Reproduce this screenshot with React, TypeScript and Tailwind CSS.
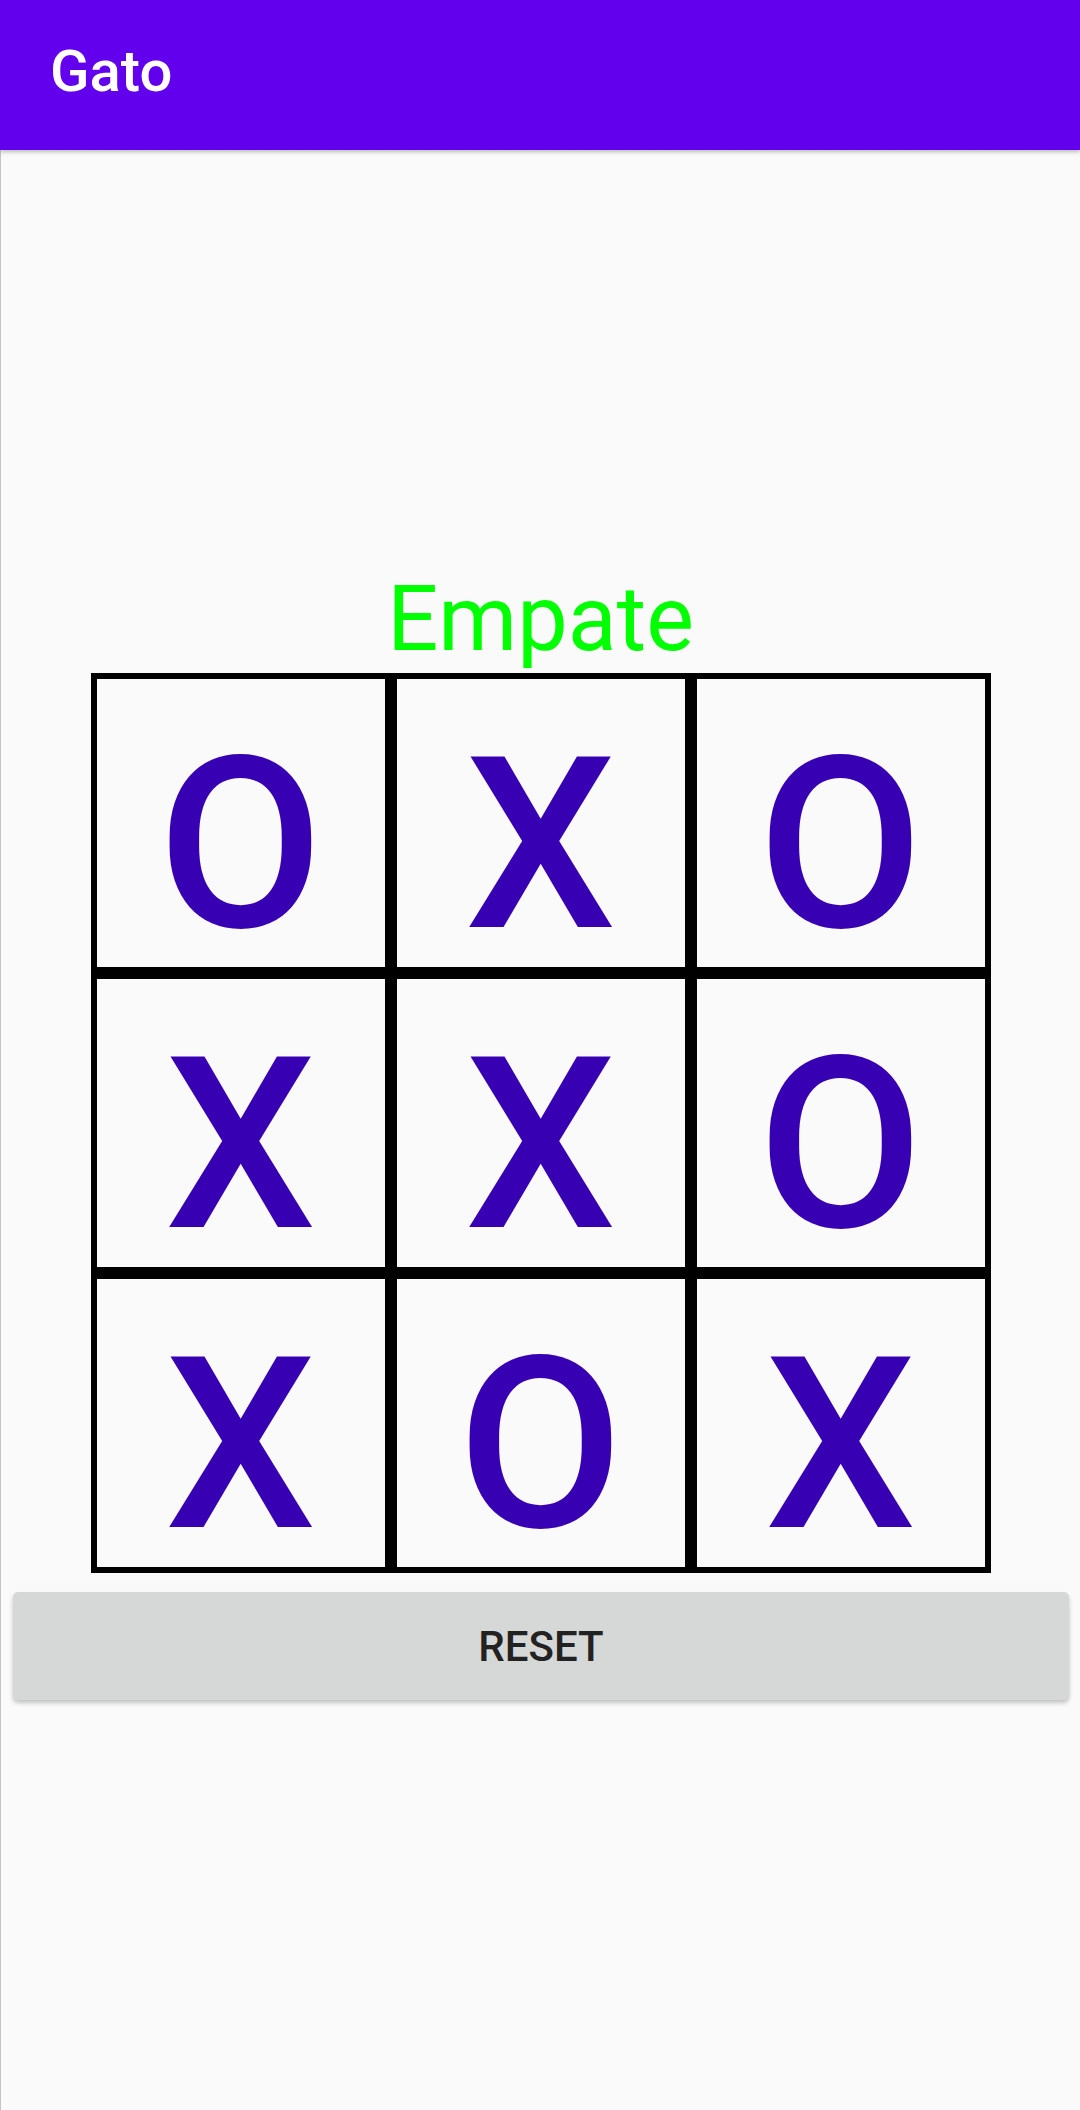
const board = ["O", "X", "O", "X", "X", "O", "X", "O", "X"];

export default function App() {
  return (
    <div className="min-h-[2110px] bg-[#fafafa] font-['Roboto',sans-serif]">
      <header className="relative z-10 h-[150px] bg-[#6200ee] pl-[50px] pt-[37px] shadow-[0_2px_4px_rgba(0,0,0,0.25)]">
        <h1 className="text-[58px] leading-[68px] font-medium text-white">Gato</h1>
      </header>

      <main className="min-h-[1960px] border-l border-[#c4c4c4] pt-[417px]">
        <p className="text-center text-[90px] leading-[106px] text-[#00ff00]">Empate</p>

        <div className="mx-auto grid w-[900px] grid-cols-3">
          {board.map((cell, i) => (
            <div
              key={i}
              className="flex h-[300px] items-end justify-center border-[6px] border-black pb-[2px]"
            >
              <span className="text-[240px] leading-none font-medium text-[#3700b3]">{cell}</span>
            </div>
          ))}
        </div>

        <button className="mx-[12px] mt-[19px] flex h-[108px] w-[1056px] items-center justify-center rounded-[5px] bg-[#d6d7d7] text-[42px] font-medium text-[#222222] shadow-[0_3px_4px_rgba(0,0,0,0.22)]">
          RESET
        </button>
      </main>
    </div>
  );
}
